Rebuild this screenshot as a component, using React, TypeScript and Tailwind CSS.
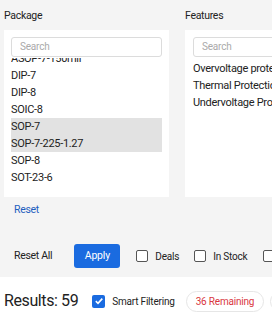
import React from "react";

const pkgs = ["ASOP-7-150mil", "DIP-7", "DIP-8", "SOIC-8", "SOP-7", "SOP-7-225-1.27", "SOP-8", "SOT-23-6", "SOT-23-8"];
const selected = ["SOP-7", "SOP-7-225-1.27"];
const feats = ["Overvoltage protection", "Thermal Protection", "Undervoltage Protection"];

function Box({ checked = false }: { checked?: boolean }) {
  if (checked) {
    return (
      <span className="w-[13px] h-[13px] rounded-[2px] bg-[#1a6be0] flex items-center justify-center shrink-0">
        <svg width="10" height="10" viewBox="0 0 10 10">
          <path d="M1.8 5.2 L4 7.3 L8.3 2.6" fill="none" stroke="white" strokeWidth="1.6" />
        </svg>
      </span>
    );
  }
  return <span className="w-[12px] h-[12px] rounded-[2px] border-[1.5px] border-[#555] bg-white shrink-0" />;
}

export default function App() {
  return (
    <div className="w-[272px] h-[320px] overflow-hidden bg-white font-['Roboto',sans-serif] text-[#222]">
      <div className="w-[420px] h-[277px] bg-[#f4f4f4] pt-[8px] pl-[4px]">
        <div className="flex gap-[16px]">
          <div className="w-[165px]">
            <div className="text-[10.5px] tracking-[-0.3px] leading-[16px] h-[22px]">Package</div>
            <div className="bg-white h-[167px] px-[7px] pt-[7px]">
              <div className="h-[20px] border border-[#dcdcdc] rounded-[3px] pl-[8px] text-[10px] tracking-[-0.2px] leading-[18px] text-[#aaa]">Search</div>
              <div className="h-[130px] overflow-hidden mt-[1px]">
                <div className="mt-[-8px]">
                  {pkgs.map((p) => (
                    <div
                      key={p}
                      className={`h-[17px] text-[11px] tracking-[-0.3px] leading-[17px] ${selected.includes(p) ? "bg-[#e2e2e2]" : ""}`}
                    >
                      {p}
                    </div>
                  ))}
                </div>
              </div>
            </div>
            <div className="pl-[10px] pt-[5px] text-[10.5px] tracking-[-0.3px] leading-[16px] text-[#1f5fbf]">Reset</div>
          </div>
          <div className="w-[165px]">
            <div className="text-[10.5px] tracking-[-0.3px] leading-[16px] h-[22px]">Features</div>
            <div className="bg-white h-[167px] px-[8px] pt-[7px]">
              <div className="h-[20px] border border-[#dcdcdc] rounded-[3px] pl-[8px] text-[10px] tracking-[-0.2px] leading-[18px] text-[#aaa]">Search</div>
              <div className="mt-[3px]">
                {feats.map((f) => (
                  <div key={f} className="h-[17px] text-[11px] tracking-[-0.3px] leading-[17px] whitespace-nowrap">
                    {f}
                  </div>
                ))}
              </div>
            </div>
          </div>
        </div>
        <div className="flex items-center mt-[26px] pl-[10px] text-[10px] tracking-[-0.2px]">
          <span className="text-[10.5px] tracking-[-0.3px]">Reset All</span>
          <span className="ml-[22px] h-[24px] w-[46px] rounded-[3px] bg-[#1a6be0] text-white text-[10.5px] flex items-center justify-center">Apply</span>
          <span className="ml-[16px] flex items-center gap-[7px]"><Box /><span>Deals</span></span>
          <span className="ml-[15px] flex items-center gap-[7px]"><Box /><span>In Stock</span></span>
          <span className="ml-[16px] flex items-center gap-[7px]"><Box /><span>Discount</span></span>
        </div>
      </div>
      <div className="w-[420px] flex items-center pl-[4px] pt-[13px]">
        <span className="text-[16px] tracking-[-0.4px] leading-[22px]">Results: 59</span>
        <span className="ml-[14px] flex items-center gap-[7px]"><Box checked /><span className="text-[10px] tracking-[-0.2px]">Smart Filtering</span></span>
        <span className="ml-[11px] h-[21px] px-[9px] rounded-full border border-[#e6e6e6] text-[10px] tracking-[-0.2px] text-[#d9363e] flex items-center">36 Remaining</span>
        <span className="ml-[6px] h-[21px] px-[9px] rounded-full border border-[#e6e6e6] text-[10px] text-[#e08a00] flex items-center">12 New</span>
      </div>
    </div>
  );
}
